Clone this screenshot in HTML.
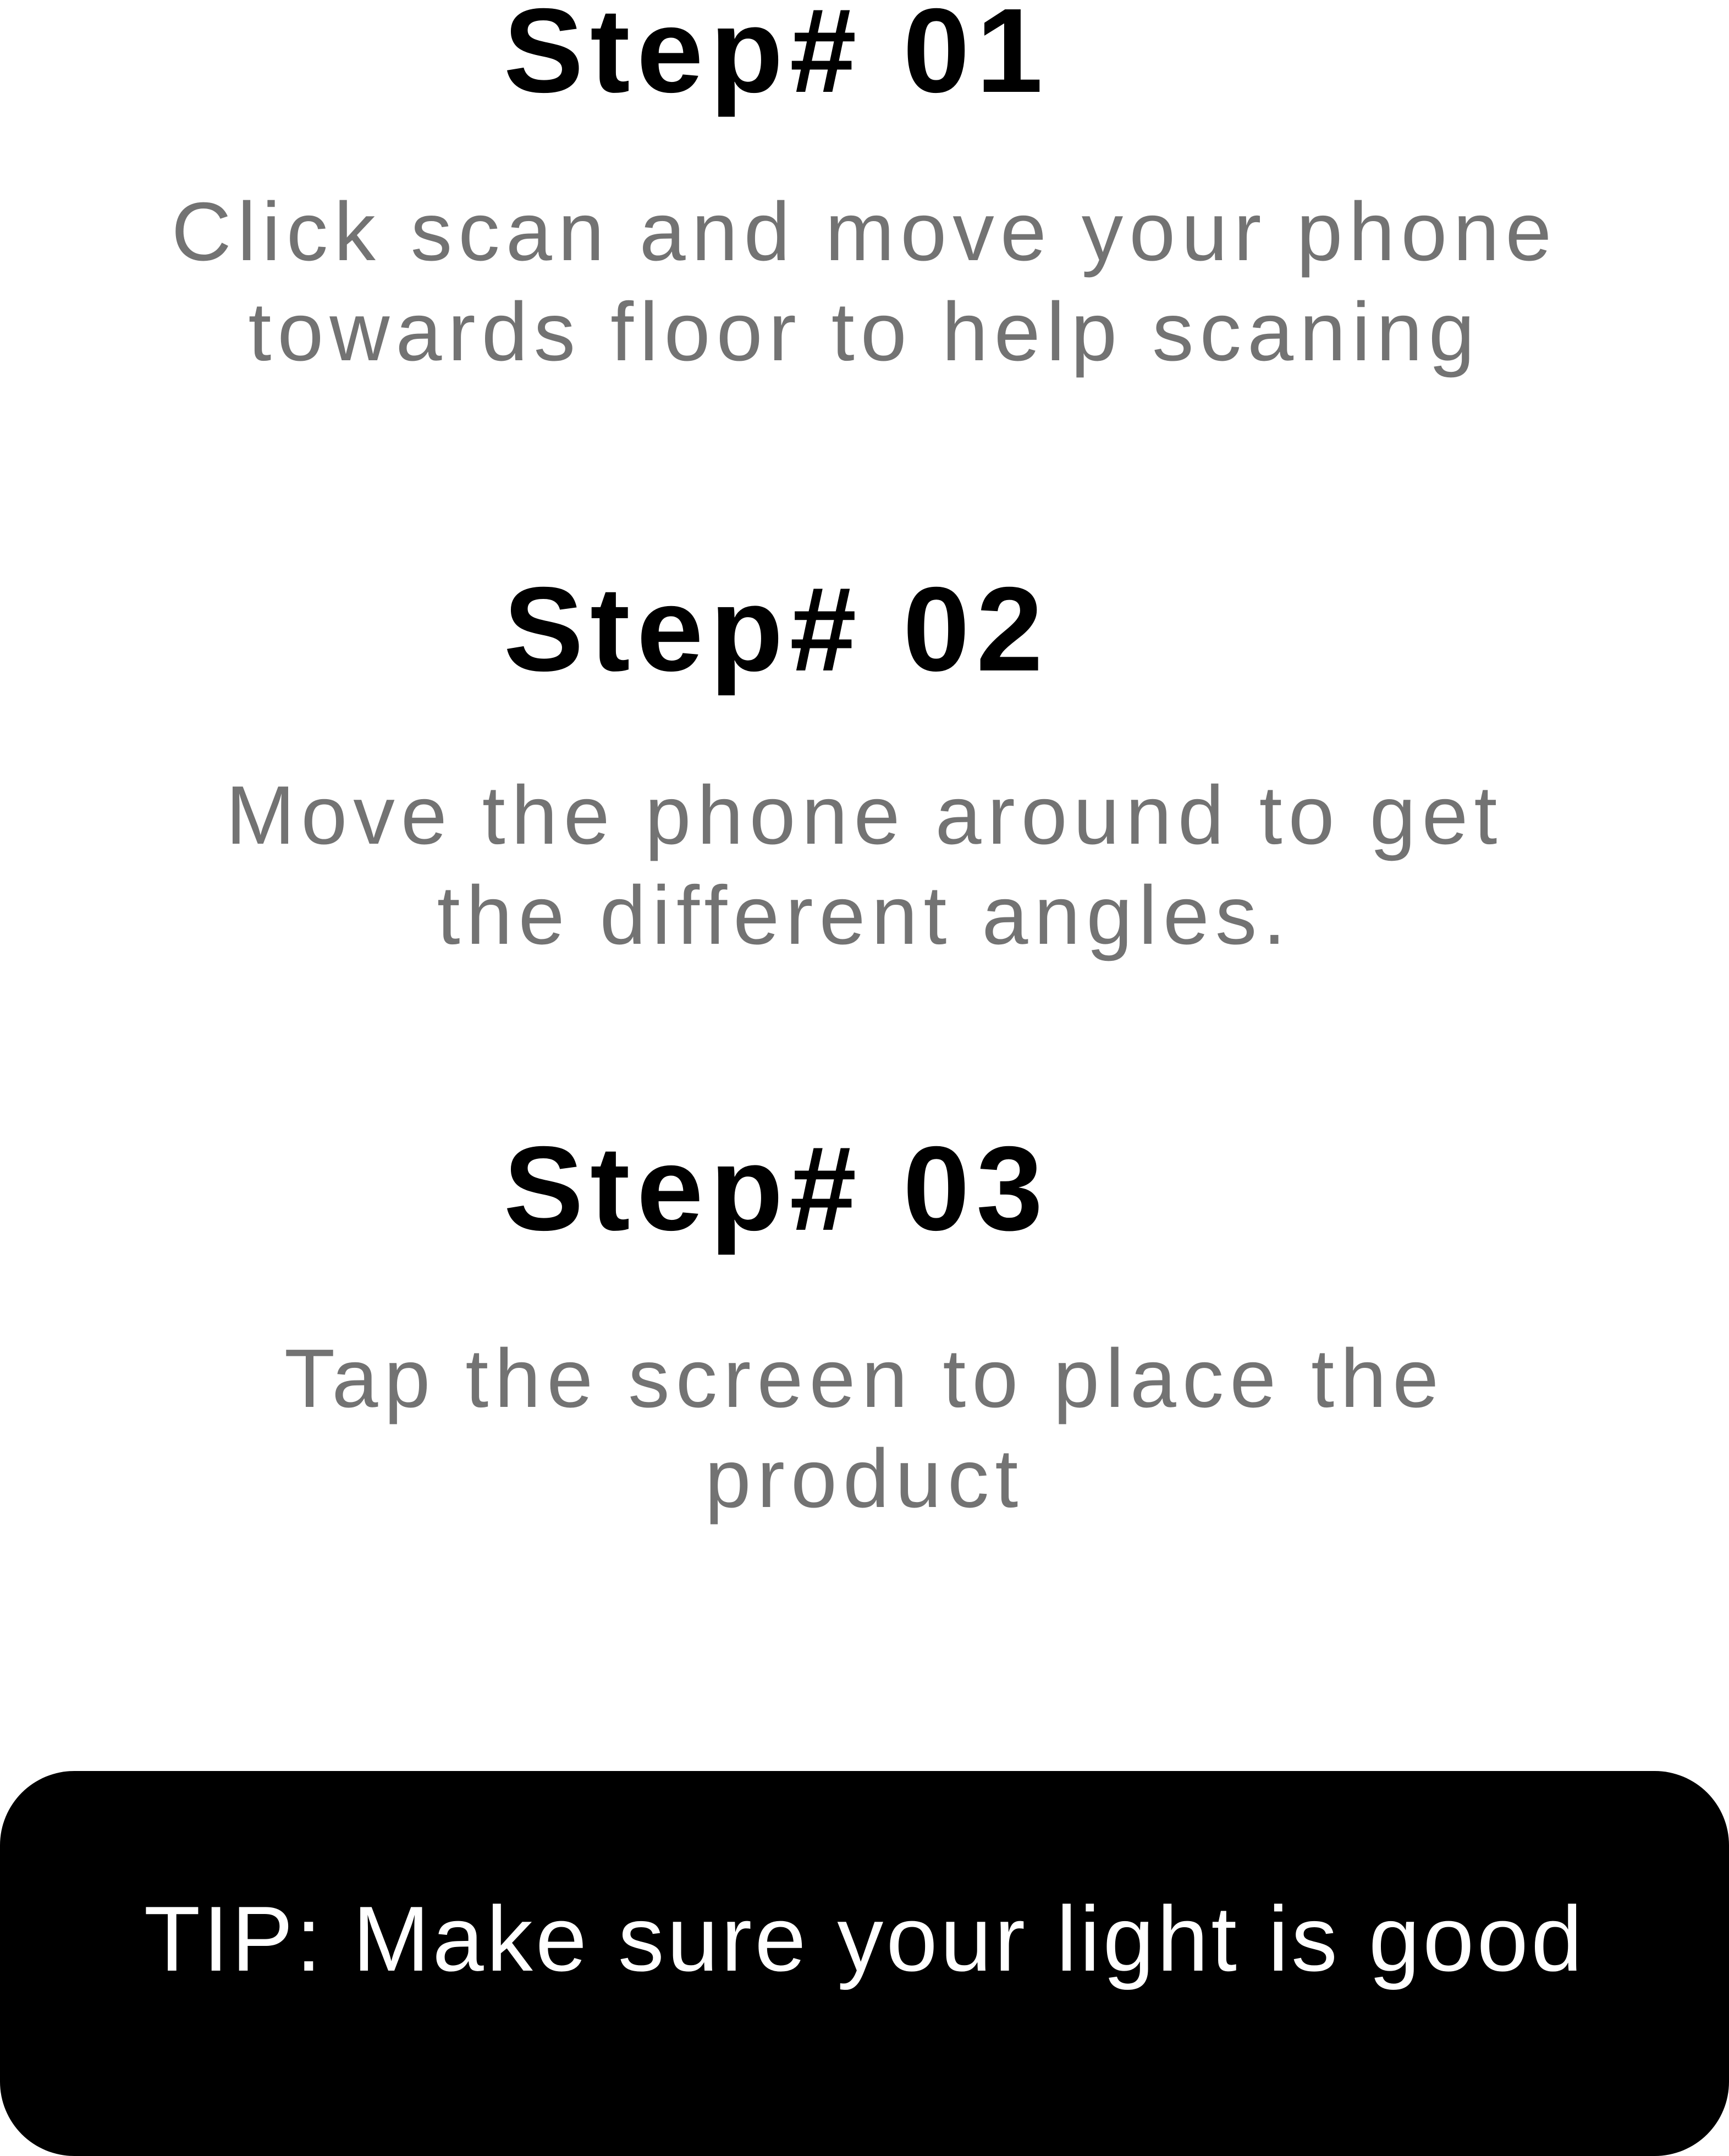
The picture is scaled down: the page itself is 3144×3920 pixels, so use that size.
<!DOCTYPE html>
<html><head><meta charset="utf-8"><style>
html,body{margin:0;padding:0;background:#fff;}
body{width:3144px;height:3840px;position:relative;overflow:hidden;font-family:"Liberation Sans",sans-serif;}
.h{position:absolute;left:0;width:2824px;text-align:center;font-weight:bold;font-size:218px;line-height:218px;color:#000;letter-spacing:12px;white-space:nowrap;}
.b{position:absolute;left:0;width:3144px;text-align:center;font-size:151px;line-height:182px;color:#737373;letter-spacing:11px;white-space:nowrap;}
.box{position:absolute;left:0;top:3220px;width:3144px;height:700px;background:#000;border-radius:135px;}
.tip{position:absolute;left:0;top:3441px;width:3144px;text-align:center;font-size:168px;line-height:168px;color:#fff;letter-spacing:5px;white-space:nowrap;}
</style></head><body>
<div class="h" style="top:-16px">Step# 01</div>
<div class="b" style="top:330px">Click scan and move your phone<br>towards floor to help scaning</div>
<div class="h" style="top:1036px">Step# 02</div>
<div class="b" style="top:1391px">Move the phone around to get<br>the different angles.</div>
<div class="h" style="top:2053px">Step# 03</div>
<div class="b" style="top:2415px">Tap the screen to place the<br>product</div>
<div class="box"></div>
<div class="tip">TIP: Make sure your light is good</div>
</body></html>
